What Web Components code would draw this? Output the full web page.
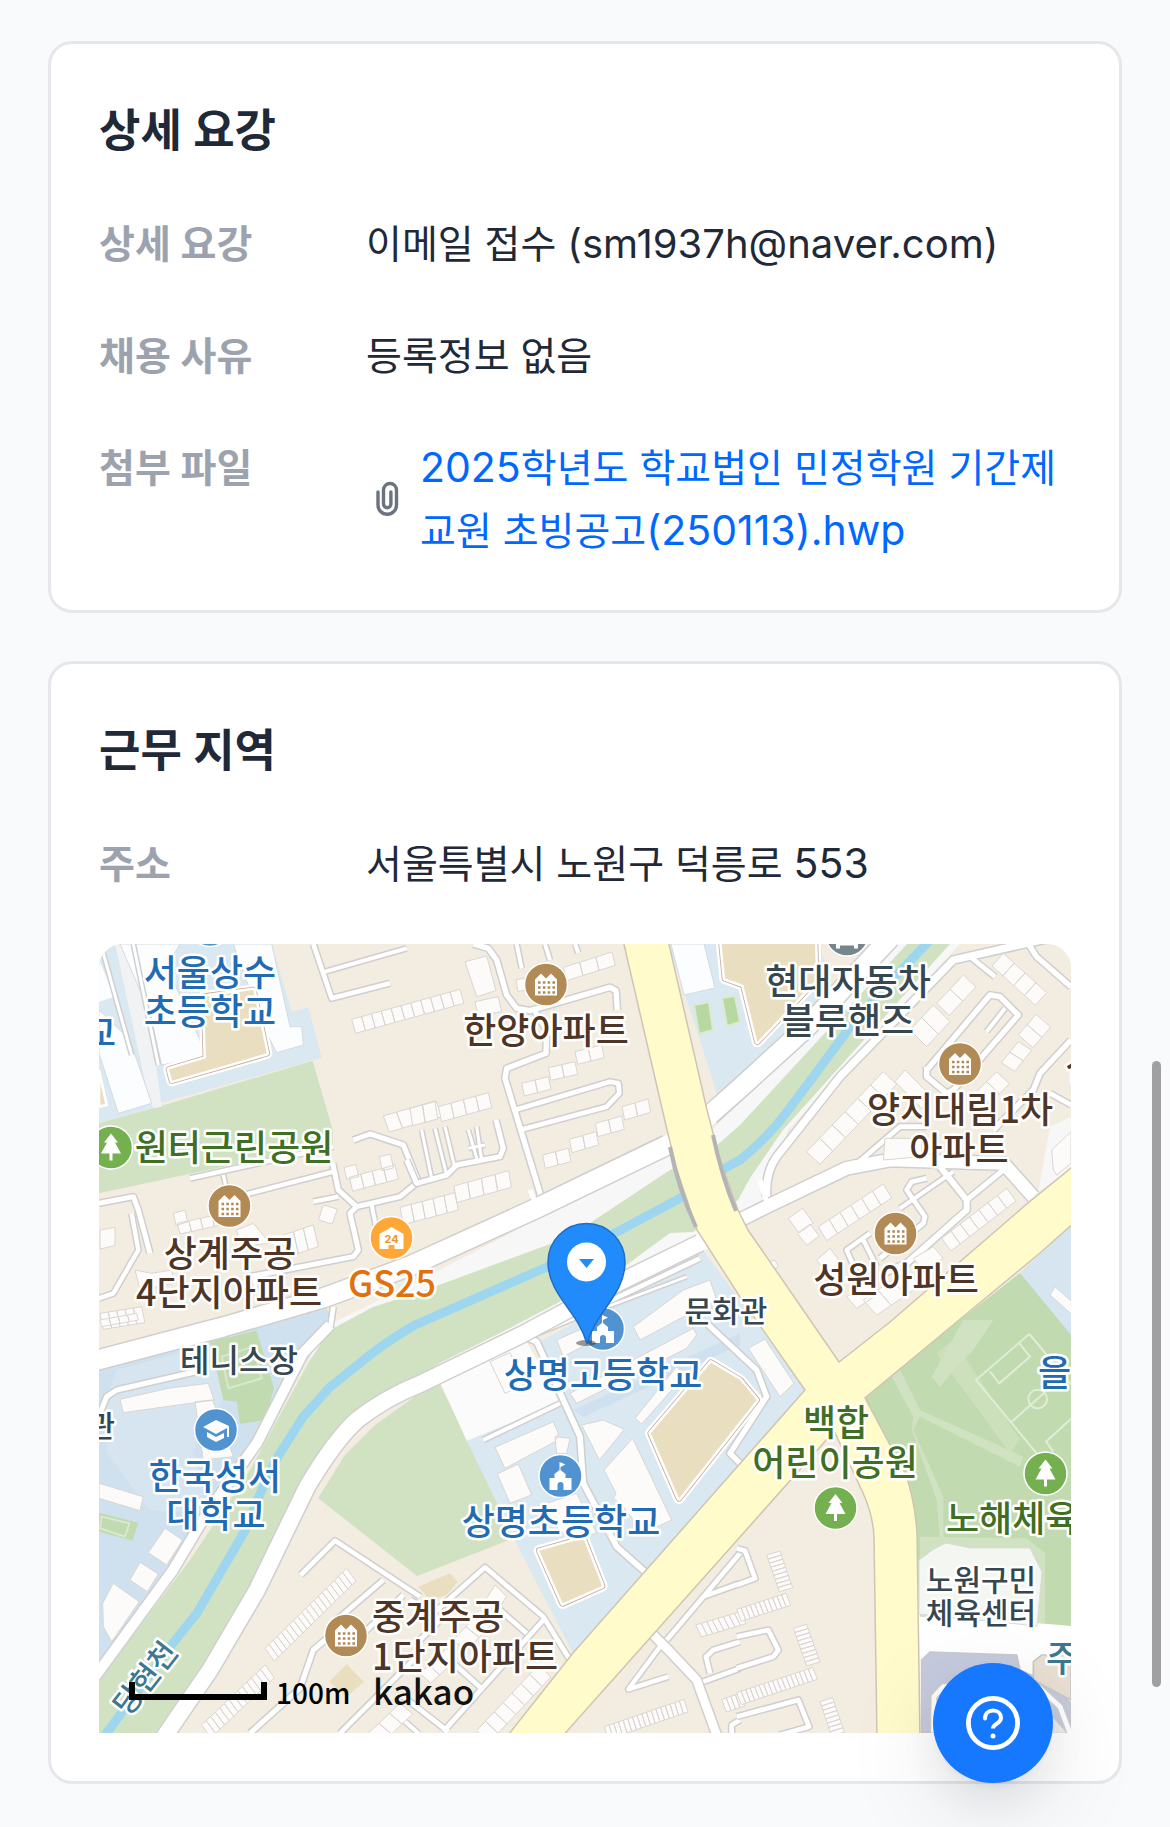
<!DOCTYPE html>
<html lang="ko">
<head>
<meta charset="utf-8">
<meta name="viewport" content="width=device-width, initial-scale=1">
<title>상세 요강</title>
<style>
body{margin:0;background:#f9fafc;color:#1f2937;font:400 39px/63px Inter,"Noto Sans CJK KR",sans-serif}
.latin{font-size:41px;line-height:1}
.mail{font-size:40px;line-height:1}
</style>
</head>
<body>
<job-page>
  <info-card heading="상세 요강">
    <info-row label="상세 요강">이메일 접수 <span class="mail">(sm1937h@naver.com)</span></info-row>
    <info-row label="채용 사유">등록정보 없음</info-row>
    <info-row label="첨부 파일"><file-link><span class="latin">2025</span>학년도 학교법인 민정학원 기간제교원 초빙공고<span class="latin">(250113).hwp</span></file-link></info-row>
  </info-card>
  <info-card heading="근무 지역">
    <info-row label="주소">서울특별시 노원구 덕릉로 <span class="latin">553</span></info-row>
    <area-map></area-map>
  </info-card>
</job-page>
<help-button></help-button>
<scroll-thumb></scroll-thumb>
<script>
class Base extends HTMLElement{
  constructor(){super();this.attachShadow({mode:'open'})}
  connectedCallback(){this.shadowRoot.innerHTML=this.render()}
}
customElements.define('job-page',class extends Base{
  render(){return `<style>:host{display:block}main{display:flex;flex-direction:column;gap:48px;padding:41px 48px 43px}</style><main><slot></slot></main>`}
});
customElements.define('info-card',class extends Base{
  render(){return `<style>
  :host{display:block}
  section{padding:48px;border:3px solid #e5e7eb;border-radius:24px;background:#fff}
  h2{margin:0 0 42px;font-size:45px;line-height:78px;font-weight:600;color:#1f2937}
  .body{display:flex;flex-direction:column;gap:49px}
  </style><section><h2>${this.getAttribute('heading')}</h2><div class="body"><slot></slot></div></section>`}
});
customElements.define('info-row',class extends Base{
  render(){return `<style>
  :host{display:flex;align-items:flex-start}
  .label{flex:0 0 267px;font-weight:600;color:#9ca3af}
  .value{flex:1;min-width:0;word-break:break-all}
  </style><div class="label">${this.getAttribute('label')}</div><div class="value"><slot></slot></div>`}
});
customElements.define('file-link',class extends Base{
  render(){return `<style>
  :host{display:flex;align-items:center;gap:12px}
  svg{flex:0 0 42px;height:42px}
  a{flex:1;color:#0068ff;text-decoration:none}
  </style><svg viewBox="0 0 42 42" fill="none" stroke="#6b7280" stroke-width="3.4" stroke-linecap="round" aria-hidden="true"><path d="M12 14V27a9 9 0 0 0 18.500 0V12a6.500 6.500 0 0 0-13 0V26a3.700 3.700 0 0 0 7.400 0V14"/></svg><a href="#"><slot></slot></a>`}
});
customElements.define('help-button',class extends Base{
  render(){return `<style>
  :host{position:fixed;right:117px;bottom:44px;display:block}
  button{display:flex;align-items:center;justify-content:center;width:120px;height:120px;padding:0;border:0;border-radius:50%;background:#1677ff;box-shadow:0 18px 48px rgba(0,0,0,.08),0 9px 18px -12px rgba(0,0,0,.12),0 27px 84px 24px rgba(0,0,0,.05)}
  </style><button type="button" aria-label="도움말"><svg width="54" height="54" viewBox="0 0 54 54" fill="none" stroke="#fff" stroke-linecap="round"><circle cx="27" cy="27" r="24.600" stroke-width="4.800"/><path d="M19 22.500c0-5 3.500-8 8-8s8 3 8 7.300c0 6.200-8 5.700-8 10.700V32" stroke-width="4"/><circle cx="27" cy="40" r="2.500" fill="#fff" stroke="none"/></svg></button>`}
});
customElements.define('scroll-thumb',class extends Base{
  render(){return `<style>:host{position:fixed;top:1061px;right:9px;width:9px;height:626px;border-radius:5px;background:#a0a0a2}</style>`}
});

/* A strip of adjoining buildings from one corner to another, with a depth vector. */
const strip=([x1,y1,x2,y2,dx,dy,n])=>{
  let s='';
  for(let i=0;i<n;i++){
    const a=x1+(x2-x1)*i/n,b=y1+(y2-y1)*i/n,c=x1+(x2-x1)*(i+1)/n,d=y1+(y2-y1)*(i+1)/n;
    s+=`M${a} ${b}L${c} ${d}L${c+dx} ${d+dy}L${a+dx} ${b+dy}Z`;
  }
  return s;
};
const lanes=list=>['#cfcfcf','#fff'].map((c,k)=>`<g fill="none" stroke="${c}" stroke-linejoin="round">`+list.map(([d,w])=>`<path d="${d}" stroke-width="${w+(k?0:9)}"/>`).join('')+'</g>').join('');
/* One tile of detail, drawn at three units to the pixel. */
const tile=(x,y,{under='',roads=[],strips=[],blocks=''})=>`<g transform="translate(${x} ${y}) scale(.33333)">${under}${lanes(roads)}<path d="${strips.map(strip).join('')}${blocks}" fill="#fcfbfa" stroke="#d9d6d2" stroke-width="3"/></g>`;
const poly=(p,f,extra='')=>`<polygon points="${p}" fill="${f}" ${extra}/>`;
const sand=p=>poly(p,'#fff','stroke="#fff" stroke-width="34" stroke-linejoin="round"')+poly(p,'#e9dfc0','stroke="#c9ab9b" stroke-width="20" stroke-linejoin="round"')+poly(p,'#e9dfc0','stroke="#fff" stroke-width="15" stroke-linejoin="round"')+poly(p,'#e9dfc0');
const disc=(x,y,c,g)=>`<g transform="translate(${x} ${y})"><circle r="21.500" fill="${c}" stroke="#fff" stroke-width="1.500"/>${g}</g>`;
const aptGlyph='<path d="M-11-5-5-11 0-6 5-11 11-5V11H-11Z" fill="#fff"/><path d="M-8-2H9M-8 3H9M-8 8H9" stroke="#b28a55" stroke-width="2.600" stroke-dasharray="2.600 2.200"/>';
const treeGlyph='<path d="M0-14 7-5H4L10 6H1.500V13H-1.500V6H-10L-4-5H-7Z" fill="#fff"/>';
const schoolGlyph='<path d="M-11 14V2h5v-4l5-4v-8l6 2.500-5 2.500v3l5 4v4h6v12H3V9a3 3 0 0 0-6 0v5Z" fill="#fff"/>';
const uniGlyph='<path d="M-13-3 0-10 13-4V7H11V-2L0 4Z" fill="#fff"/><path d="M-9 2 0 7 8 3V8L0 12-9 7Z" fill="#fff"/>';
const text=(cls,x,y,t,extra='')=>`<text class="${cls}" x="${x}" y="${y}" ${extra}>${t}</text>`;

customElements.define('area-map',class extends Base{
  render(){
    const brown='#b28a55',blue='#5093d0',green='#74b04f';
    return `<style>
    :host{display:block;height:789px;border-radius:24px 24px 0 0;overflow:hidden;background:#f3ece1}
    svg{display:block;width:100%;height:100%}
    text{font:500 36px "Noto Sans CJK KR",sans-serif;text-anchor:middle;paint-order:stroke;stroke:#fff;stroke-width:5px;stroke-linejoin:round}
    .apt{fill:#4f3526}.school{fill:#216bb5}.park{fill:#3f6f22}.place{fill:#36474f}.store{fill:#e2700c}.water{fill:#3c7890}
    .small{font-size:30px}.mid{font-size:32px}.start{text-anchor:start}.end{text-anchor:end}
    .scale{font-size:28px;fill:#000;stroke:none}.brand{font-size:35px;fill:#111;stroke:none}
    </style>
    <svg viewBox="99 944 972 789" preserveAspectRatio="xMidYMid slice" role="img" aria-label="지도">
    <rect x="99" y="944" width="972" height="789" fill="#f3ece1"/>
    ${poly('318,1330 420,1280 540,1218 667,1155 712,1130 800,1040 895,944 960,944 788,1130 760,1205 740,1212 693,1245 600,1292 420,1383 310,1360','#f7f7f8')}
    ${poly('99,1370 225,1335 320,1300 335,1320 300,1370 207,1520 99,1685','#cfe1ef')}
    ${poly('330,1330 373,1307 420,1292 553,1243 590,1223 670,1170 715,1147 740,1125 907,944 950,944 783,1130 750,1178 738,1200 693,1232 670,1233 640,1255 620,1270 510,1328 440,1363 420,1376 360,1420 305,1485 257,1590 167,1733 99,1733 99,1680 190,1560 250,1470 310,1360','#d1e2c2')}
    ${poly('318,1498 345,1455 375,1425 438,1380 500,1507 517,1537 417,1576','#d1e2c2')}
    <path d="M103 1738 170 1647 197 1613 247 1527Q262 1485 280 1453L303 1417 330 1387 360 1363Q385 1342 415 1325L547 1267 617 1232 677 1200 727 1167 740 1160Q765 1140 783 1117L813 1077 850 1027 880 993 930 940" fill="none" stroke="#9dd6ee" stroke-width="9"/>
    ${poly('740,1100 722,1110 700,1040 668,944 800,944 820,944 830,990 760,1070','#dae8f1')}
    ${poly('467,1441 557,1402 537,1343 617,1300 703,1250 740,1300 805,1390 573,1653 517,1545','#dae8f1')}
    ${poly('865,1398 947,1330 1020,1273 1071,1330 1071,1626 1037,1625 917,1610 917,1533 905,1473','#c2dab0')}
    ${poly('1020,1273 1071,1225 1071,1335','#d6e5f0')}
    ${poly('919,1613 1071,1626 1071,1733 919,1733','#fff')}

    ${tile(90,930,{
      under:poly('27,42 545,42 605,245 655,232 695,383 215,518 190,535 27,580','#dae8f1')+poly('27,580 190,535 668,392 728,600 728,640 27,790','#d1e2c2')
       +poly('75,42 150,42 215,530 190,535 175,500','#f1f2f4')
       +poly('90,42 270,42 230,110 330,330 340,380 215,405 180,250','#fbfdff','stroke="#d4dbe2" stroke-width="3"')
       +poly('27,240 120,330 185,520 85,550 27,370','#fbfdff','stroke="#d4dbe2" stroke-width="3"')
       +poly('27,90 75,200 27,215','#fbfdff')
       +poly('430,42 545,42 600,290 635,290 640,345 560,368 520,290','#fbfdff','stroke="#d4dbe2" stroke-width="3"')
       +sand('237,418 348,385 342,200 490,180 530,370 246,452')+poly('27,420 50,525 27,530','#e9dfc0','stroke="#fff" stroke-width="8"'),
      roads:[['M40 70 125 375',9],['M130 42 205 405',9],['M670 42 725 205 900 160',14],['M705 125 950 55',12],['M790 630 840 612 940 645 985 755 930 800 800 830 745 780 728 700',15],['M300 745 730 650',13],['M400 735 410 780',10],['M460 795 730 725',13],['M670 815 745 800',13],['M800 830 780 850 805 960 790 980 480 1040',15],['M845 825 860 900',12],['M27 820 130 800 145 840 180 970',15],['M125 850 145 960 70 1090 27 1105',13],['M490 1030 500 1090',11],['M730 1130 720 1200',14]],
      strips:[[785,268,1110,178,12,42,11],[880,558,1038,512,18,48,4],[778,742,915,705,10,42,4],[30,1150,155,1130,10,48,5],[250,850,285,840,8,36,1],[262,880,400,850,8,32,4],[580,915,670,885,15,65,3],[685,870,700,825,42,12,1],[955,830,1010,815,10,45,1]],
      blocks:'M762 712l36-8 8 36-36 8zM868 680l34-8 8 42-34 8zM30 900l45-8 0 55-45 10zM135 1020l50 10 60-10 5 40-100 20zM440 900l50-20 50 60-90 10z'
    })}
    ${tile(410,930,{
      roads:[['M190 42 235 55 260 90 290 195 320 235 360 242 600 172 618 182 622 240',16],['M320 42 335 115M405 42 420 90M495 42 505 68',12],['M375 245 410 300 408 370 290 415 285 445 390 790 390 815',16],['M315 540 600 455 625 460 628 490 590 530 330 600',14],['M-10 690 20 760 110 735 140 705 270 680 280 655 258 570',15],['M35 600 65 745M75 595 110 735M105 590 135 715M175 600 205 700M200 590 215 690M175 655 225 645',9]],
      strips:[[335,460,415,440,8,38,2],[415,413,495,395,8,38,2],[495,365,575,345,8,38,2],[398,675,475,655,8,40,2],[478,628,558,605,8,40,2],[556,580,635,558,8,40,2],[636,530,714,507,8,40,2],[460,112,606,66,10,40,3],[0,535,75,515,8,52,2],[85,530,235,488,10,45,4],[-30,832,135,788,10,52,5],[132,768,296,722,8,50,4]],
      blocks:'M165 95 230 78 258 182 200 200zM195 215 265 200 275 245 205 258zM318 150l24-6 6 35-24 6z'
    })}
    ${tile(740,930,{
      under:poly('895,785 930,590 993,560 993,715','#f7f7f8')+sand('-55,42 225,42 228,150 52,335 10,165 -45,145'),
      roads:[['M993 10 640 90 300 440 110 680Q75 730 80 800',22],['M0 870 90 825 320 715 450 690 790 700 880 800',38],['M690 80 765 140',14],['M865 42 890 80 993 170',16],['M993 330 900 430 880 480 760 600',16],['M930 490 993 525',14],['M340 710 480 590 560 590',14],['M560 420 750 195 780 200 835 255 640 480 620 490 560 440 560 410',16],['M740 305 795 235',12],['M600 710 680 810 680 840 500 1000 430 1030',18],['M560 745 515 755 500 780 555 860 550 880 420 985',14],['M640 725 480 835',12],['M680 810 790 720',15],['M390 910 320 960 350 1030M370 930 410 1010',13]],
      strips:[[200,665,430,425,40,38,6],[510,300,580,225,50,50,2],[590,220,670,135,38,36,2],[790,70,920,188,-34,38,4],[835,315,888,253,44,38,2],[784,398,835,335,40,26,2],[465,455,495,420,80,80,1],[710,485,770,425,38,36,2],[235,890,430,762,25,42,6],[145,865,188,835,32,44,1],[172,910,210,882,28,36,1],[605,925,800,775,28,38,7],[320,1100,380,1060,30,35,1],[370,1110,500,1020,40,46,3],[230,990,270,955,30,40,1],[520,985,580,950,30,35,1],[930,1095,945,1070,90,80,1]],
      blocks:'M435 625H545V680L430 690zM993 605 935 660 940 720 950 735 993 700zM90 995l15-5 10 20-15 8z'
    })}
    ${tile(90,1320,{
      under:poly('80,150 300,90 340,60 420,200 310,390 350,580 180,570 50,400 40,260','#d6e5f0')+poly('360,65 500,32 552,205 525,300 450,312 440,245 400,240','#c2dab0')+'<path d="M395 110 490 80 515 175 415 205ZM400 140 495 110" fill="none" stroke="#d8e8cb" stroke-width="6"/>'+poly('27,578 145,608 128,662 27,635','#c2dab0')+'<path d="M35 590 118 610 105 650 30 625Z" fill="none" stroke="#dcead2" stroke-width="5"/>'+poly('770,1033 822,1085 770,1130 718,1085','#e9dfc0'),
      roads:[['M30 280 50 230 80 210 340 150',15],['M632 765 735 662 990 830',14],['M880 780 740 900 740 990M940 825 820 940',14],['M480 1240 630 1105 670 990 740 930',15],['M750 1240 990 1000',14],['M940 1200 985 1240',12]],
      strips:[[525,985,770,745,28,38,20],[335,1215,525,1035,28,38,14],[835,1240,930,1150,38,32,3],[30,0,140,-20,5,20,4]],
      blocks:'M90 238 235 205 355 190 372 240 100 278zM315 245 368 240 430 410 340 420zM27 490 160 530 150 572 27 535zM225 625 278 660 230 735 175 698zM150 727 205 762 172 815 120 780zM70 790 148 845 65 965 40 920 38 850z'
    })}
    ${tile(410,1320,{
      under:poly('88,180 350,65 450,250 170,362','#fbfbfb')+poly('490,270 990,40 990,75 520,290','#cfe1ef')+poly('25,800 120,760 143,785 110,825 60,840','#e9dfc0'),
      roads:[['M345 50 380 65 510 350 520 490 620 680 710 760',17],['M220 360 450 250',12],['M380 40 500 -10 870 -185',14],['M500 -5 830 -130',8],['M890 10 1040 150 1070 230 960 400 990 430',16],['M0 840 70 880 225 742 400 890 480 1020',14],['M400 900 100 1235M-20 1130 115 1235M90 900 20 970M350 940 270 870M220 1110 130 1030',14],['M725 940 770 985 860 1080 920 1245',26],['M770 960 880 830 990 700M880 830 990 790',14],['M775 1070 655 1108 750 980',13],['M880 1085 990 1045M900 1060 888 1010 910 990 990 965M990 1200 965 1215 965 1240',14]],
      strips:[[200,1232,385,1035,38,36,7],[857,915,990,875,18,36,8],[583,1220,822,1138,12,38,17],[935,1138,990,1120,14,38,4],[130,960,205,880,40,32,2],[230,835,255,795,35,34,1],[30,1060,110,985,32,30,3]],
      blocks:'M240 125 300 98 340 195 285 220zM255 382 430 305 445 340 435 365 285 445zM262 462 325 432 365 525 300 550zM435 350 480 355 470 400 440 400zM515 315 580 300 643 328 568 420zM668 355 785 600 700 640 640 560 610 535 618 520 582 450zM440 60 620-20 630 20 460 110zM480 220 850 25 860 45 830 85 500 250zM675 295 800 140 825 165 695 312zM380 560 500 520 560 640 480 660zM820-90 900-120 920-60 840-20 690 60 670 20z'
    })}
    <g transform="translate(410 1320) scale(.33333)">${sand('722,340 903,128 990,180 1040,240 807,535')}${sand('388,692 520,655 576,798 458,850')}</g>
    ${tile(740,1320,{
      under:poly('455,170 480,150 540,270 850,410 840,440 540,290 520,330 610,530 610,660 600,660 590,540 515,330 520,290','#d1e2c2')+poly('590,100 640,60 840,360 810,400','#d1e2c2','opacity=".7"')+poly('670,0 760,0 700,90 650,140 600,200 575,170','#d1e2c2')+poly('540,650 860,655 915,700 915,910 540,890','#d1e2c2')+'<path d="M868 42 708 180 890 400M868 42 1000 200M750 155 778 190 870 110 838 70M815 305 990 150M1000 290 918 365 940 395" fill="none" stroke="#e0edd6" stroke-width="6"/><circle cx="893" cy="237" r="28" fill="none" stroke="#e0edd6" stroke-width="6"/>'
       +poly('545,1020 570,996 830,1005 840,1050 930,1090 993,1150 993,1238 545,1238','#c5cade','stroke="#c9c9cb" stroke-width="5"')+poly('880,1025 905,1005 993,1005 993,1140 880,1080','#e9e0d3','stroke="#c9c9cb" stroke-width="5"')+poly('590,1130 620,1105 860,1110 980,1238 590,1238','#ededf0'),
      roads:[['M580 1238 582 1130 610 1100 900 1105 960 1160 990 1240',14],['M-10 685 15 692 45 775 -10 795M-10 950 85 930 115 990 100 1010 -10 1045M-10 1190 175 1140 207 1220 120 1245',14]],
      strips:[[80,705,118,815,40,-12,9],[-10,868,138,820,14,36,11],[160,925,200,1038,40,-12,9],[-10,1118,218,1042,14,36,17],[240,1145,275,1248,38,-12,8]],
      blocks:'M25 85 75 57 162 190 120 230z'
    })}

    <g fill="none" stroke-linejoin="round"><g stroke="#d0cfcf">
      <path d="M94 1361 223 1327 323 1298 410 1266 537 1208 667 1145" stroke-width="22"/>
      <path d="M710 1115 740 1088 807 1027 890 938" stroke-width="22"/>
      <path d="M162 1740 210 1670 257 1590 307 1487Q335 1440 357 1420 385 1398 420 1384L523 1334 620 1282 700 1243" stroke-width="19"/>
      <path d="M94 1678 173 1570 207 1513 257 1443 303 1353 330 1325" stroke-width="13"/></g>
      <g stroke="#fff">
      <path d="M94 1361 223 1327 323 1298 410 1266 537 1208 680 1139" stroke-width="19"/>
      <path d="M705 1119 740 1088 807 1027 890 938" stroke-width="19"/>
      <path d="M162 1740 210 1670 257 1590 307 1487Q335 1440 357 1420 385 1398 420 1384L523 1334 620 1282 710 1238" stroke-width="16"/>
      <path d="M94 1678 173 1570 207 1513 257 1443 303 1353 330 1325" stroke-width="10"/></g></g>
    <path d="M530 1190 541 1215M760 1180 768 1206" stroke="#fff" stroke-width="5"/>

    <path d="M623 940 667 1130 677 1170 697 1230 740 1297 805 1390 573 1653 505 1739H560L740 1537 828 1438 835 1433 863 1493Q873 1515 874 1537L877 1739H920L917 1533Q915 1500 905 1473L865 1398 947 1330 1040 1253 1076 1221V1164L1028 1203 890 1322 839 1362 817 1330 748 1230 738 1210 720 1160 707 1110 668 940Z" fill="#fffbcb" stroke="#cfc5b2" stroke-width="1.500"/>
    <path d="M670 1147Q678 1188 696 1227M713 1135Q722 1178 736 1211" fill="none" stroke="#b4b4b6" stroke-width="4"/>
    ${poly('694,1005 709,1002 713,1030 699,1034','#b8d8a2','stroke="#dcead2" stroke-width="2"')}${poly('722,998 735,996 740,1022 727,1026','#b8d8a2','stroke="#dcead2" stroke-width="2"')}
    ${poly('671,944 704,944 715,988 684,995','#fbfdff','stroke="#d4dbe2"')}
    ${poly('919,1560 934,1549 946,1543 970,1548 1030,1548 1042,1572 1037,1626 919,1614','#f4f6f1','stroke="#d9dcd8"')}

    ${disc(229.5,1206,brown,aptGlyph)}${disc(546,984.5,brown,aptGlyph)}${disc(960,1064,brown,aptGlyph)}${disc(895.5,1233.5,brown,aptGlyph)}${disc(346,1635.5,brown,aptGlyph)}
    ${disc(111,1147.5,green,treeGlyph)}${disc(835.5,1508,green,treeGlyph)}${disc(1045.5,1473.5,green,treeGlyph)}
    ${disc(560.5,1476,blue,schoolGlyph)}${disc(603,1329,blue,schoolGlyph)}${disc(216,1430,blue,uniGlyph)}
    ${disc(210,925,blue,'')}${disc(847,934.5,'#77858c','<path d="M-11 5H11V14H7V11H-7V14H-11Z" fill="#fff"/>')}
    ${disc(391.5,1238,'#ffa838','<path d="M-12-4 0-11 12-4V11H3V7H-3V11H-12Z" fill="#fff"/>')}
    <text x="391.5" y="1243" style="font:700 11px Inter,sans-serif;fill:#ef9420;stroke:none">24</text>

    ${text('school',210,986,'서울상수')}${text('school',210,1025,'초등학교')}${text('school end',116,1046,'교')}
    ${text('park',234,1161,'원터근린공원')}
    ${text('apt',230,1267,'상계주공')}${text('apt',229,1306,'4단지아파트')}
    ${text('store',392,1297,'GS25')}${text('apt',546,1044,'한양아파트')}
    ${text('place',848,995,'현대자동차')}${text('place',848,1034,'블루핸즈')}
    ${text('apt',960,1123,'양지대림1차')}${text('apt',959,1163,'아파트')}${text('apt start',1065,1080,'신')}
    ${text('apt',896,1293,'성원아파트')}${text('place small',726,1322,'문화관')}
    ${text('place mid',239,1372,'테니스장')}${text('place small end',115,1437,'관')}
    ${text('school',215,1490,'한국성서')}${text('school',216,1528,'대학교')}
    ${text('school',603,1388,'상명고등학교')}${text('school',561,1535,'상명초등학교')}
    ${text('park',836,1436,'백합')}${text('park',835,1476,'어린이공원')}${text('park start',946,1532,'노해체육')}
    ${text('place small',981,1591,'노원구민')}${text('place small',981,1624,'체육센터')}
    ${text('school start',1038,1386,'을')}${text('water start',1046,1672,'주')}
    ${text('apt start',372,1630,'중계주공')}${text('apt start',372,1670,'1단지아파트')}
    ${text('water small',145,1689,'당현천','transform="rotate(-52 145 1678)"')}

    <ellipse cx="586" cy="1343" rx="10" ry="3" fill="#333" opacity=".5"/>
    <path d="M587 1344C579 1312 548 1295 548 1262a38.500 38.500 0 0 1 77 0C625 1295 595 1312 587 1344Z" fill="#228bfc" stroke="#1f6dc6" stroke-width="1.500"/>
    <circle cx="586.500" cy="1262" r="19.500" fill="#fff"/><path d="M579 1259H594L586.500 1268Z" fill="#228bfc"/>
    <path d="M132 1682V1697H264V1682" fill="none" stroke="#000" stroke-width="6"/>
    ${text('scale start',276,1704,'100m')}${text('brand start',373,1705,'kakao')}
    </svg>`}
});
</script>
</body>
</html>
